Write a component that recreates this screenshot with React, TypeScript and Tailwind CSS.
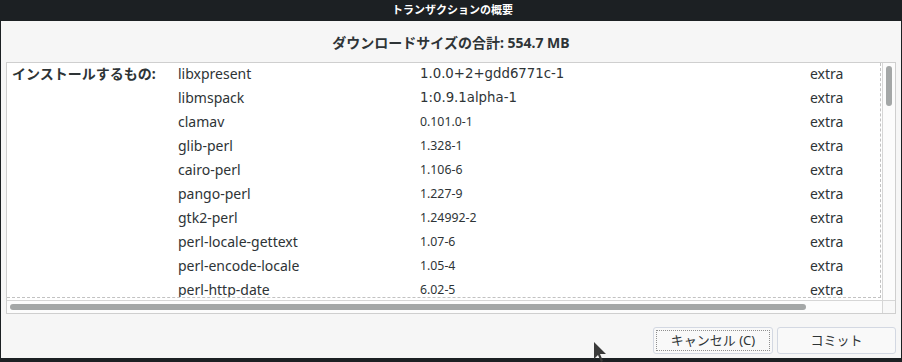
import React from 'react';

const FONT = '"Noto Sans", "Noto Sans CJK JP", sans-serif';

const packages = [
  { name: 'libxpresent', version: '1.0.0+2+gdd6771c-1', wide: true },
  { name: 'libmspack', version: '1:0.9.1alpha-1', wide: true },
  { name: 'clamav', version: '0.101.0-1' },
  { name: 'glib-perl', version: '1.328-1' },
  { name: 'cairo-perl', version: '1.106-6' },
  { name: 'pango-perl', version: '1.227-9' },
  { name: 'gtk2-perl', version: '1.24992-2' },
  { name: 'perl-locale-gettext', version: '1.07-6' },
  { name: 'perl-encode-locale', version: '1.05-4' },
  { name: 'perl-http-date', version: '6.02-5' },
];

const PackageRow = ({ index, name, version, wide }: { index: number; name: string; version: string; wide?: boolean }) => (
  <div className="grid grid-cols-[171px_242px_390px_1fr] h-[24px] items-center shrink-0">
    <div className="pl-[5px] text-[14px] font-bold">{index === 0 ? 'インストールするもの:' : ''}</div>
    <div className="text-[14px]">{name}</div>
    {wide ? (
      <div className="text-[13.3px] pt-[2px] font-['DejaVu_Sans',sans-serif]">{version}</div>
    ) : (
      <div className="text-[12.3px] pt-[2px]">{version}</div>
    )}
    <div className="text-[14px]">extra</div>
  </div>
);

const App: React.FC = () => {
  return (
    <div
      className="relative w-[902px] h-[362px] bg-[#1c2023] flex flex-col overflow-hidden text-[#2e3436]"
      style={{ fontFamily: FONT }}
    >
      {/* title bar */}
      <div className="h-[21px] flex items-center justify-center text-white text-[11px] font-bold pl-[3px]">
        トランザクションの概要
      </div>

      {/* dialog body */}
      <div className="ml-[1px] mr-[1px] h-[337px] bg-[#f6f6f6] flex flex-col px-[5px]">
        <div className="h-[41px] flex items-center justify-center text-[14px] font-bold pt-[1px]">
          ダウンロードサイズの合計: 554.7 MB
        </div>

        <div className="h-[252px] border border-[#cfcfcf] bg-white flex flex-col">
          <div className="flex h-[237px]">
            <div className="flex-1 overflow-hidden">
              <div className="h-[235px] mr-[1px] border-r border-b border-dashed border-[#c2c2c2] overflow-hidden flex flex-col">
                <div className="-mt-[2px] flex flex-col">
                  {packages.map((p, i) => (
                    <PackageRow key={p.name} index={i} {...p} />
                  ))}
                </div>
              </div>
            </div>
            <div className="w-[13px] border-l border-[#d6d6d6] bg-[#fcfcfc] pt-[3px] pl-[3px]">
              <div className="w-[6px] h-[40px] rounded-full bg-[#a4a7a7]" />
            </div>
          </div>
          <div className="flex h-[13px] border-t border-[#d6d6d6]">
            <div className="flex-1 bg-[#fcfcfc] pt-[3px] pl-[3px]">
              <div className="w-[796px] h-[6px] rounded-full bg-[#a4a7a7]" />
            </div>
            <div className="w-[13px] border-l border-[#d6d6d6] bg-[#f8f8f8]" />
          </div>
        </div>

        <div className="mt-[13px] flex justify-end gap-[4px]">
          <button className="w-[120px] h-[27px] rounded-[3px] border border-[#d3d8e2] bg-[#f9f9f9] p-[2px] text-[13px]">
            <span className="flex h-full items-center justify-center border border-dotted border-[#8f8f8f]">
              キャンセル (C)
            </span>
          </button>
          <button className="w-[119px] h-[27px] rounded-[3px] border border-[#d3d8e2] bg-[#f9f9f9] text-[13px] flex items-center justify-center">
            コミット
          </button>
        </div>
      </div>

      {/* mouse pointer */}
      <svg className="absolute left-[594px] top-[342px]" width="14" height="22" viewBox="0 0 14 22">
        <polygon points="0,0 0,17 4,13 7,20 9,19 6,12 12,12" fill="#3a3a3a" />
      </svg>
    </div>
  );
};

export default App;
